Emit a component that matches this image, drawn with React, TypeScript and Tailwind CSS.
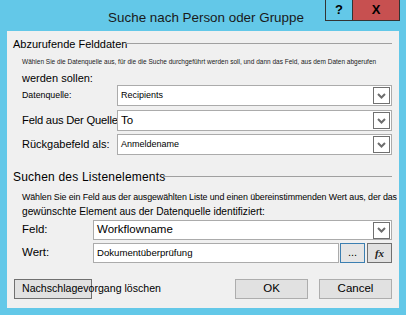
import React from "react";

const font = { fontFamily: '"Liberation Sans", Arial, sans-serif' };

const Chevron = () => (
  <svg width="9" height="6" viewBox="0 0 9 6">
    <path d="M1 1 L4.5 4.5 L8 1" fill="none" stroke="#6d6d6d" strokeWidth="2" />
  </svg>
);

const Select = ({ value, className = "" }: { value: string; className?: string }) => (
  <div className="flex-1 h-full flex items-center bg-white border border-[#ababab] pl-[3px] pr-[1px]">
    <span className={`flex-1 whitespace-nowrap ${className}`}>{value}</span>
    <div className="w-[17px] h-[17px] border border-[#707070] bg-white flex items-center justify-center">
      <Chevron />
    </div>
  </div>
);

const Heading = ({ title, className = "" }: { title: string; className?: string }) => (
  <div className="h-[14px] flex items-center pl-[6px] pr-[7px]">
    <span className={`text-black whitespace-nowrap ${className}`}>{title}</span>
    <div className="flex-1 h-px bg-[#a0a0a0] -ml-[2px] -translate-y-[1px]" />
  </div>
);

export default function App() {
  return (
    <div className="w-[406px] h-[315px] bg-[#63c8e8] flex flex-col overflow-hidden" style={font}>
      <div className="relative h-[31px]">
        <div className="w-full text-center text-[13.4px] text-[#1a1a1a] pt-[8px] pl-[6px]">
          Suche nach Person oder Gruppe
        </div>
        <div className="absolute top-[-1px] right-[6px] flex h-[22px] border border-[#333]">
          <div className="w-[27px] flex items-center justify-center text-[13px] font-bold text-black border-r border-[#333]">?</div>
          <div className="w-[46px] bg-[#c75050] flex items-center justify-center text-[13px] font-bold text-black">X</div>
        </div>
      </div>

      <div className="mx-[7px] h-[277px] bg-[#f0f0f0] flex flex-col pt-[6px]">
        <Heading title="Abzurufende Felddaten" className="text-[11px]" />
        <div className="mt-[6px] h-[10px] pl-[15px] flex items-center text-[6.5px] text-[#1a1a1a] whitespace-nowrap">
          Wählen Sie die Datenquelle aus, für die die Suche durchgeführt werden soll, und dann das Feld, aus dem Daten abgerufen
        </div>
        <div className="mt-[4px] h-[14px] pl-[15px] flex items-center text-[11px] text-black">werden sollen:</div>

        <div className="h-[21px] flex pl-[15px] pr-[7px]">
          <div className="w-[95px] flex items-center text-[8.8px] text-black">Datenquelle:</div>
          <Select value="Recipients" className="text-[9px]" />
        </div>
        <div className="mt-[4px] h-[21px] flex pl-[15px] pr-[7px]">
          <div className="w-[95px] flex items-center text-[11.2px] text-black whitespace-nowrap tracking-[-0.2px]">Feld aus Der Quelle:</div>
          <Select value="To" className="text-[11.5px]" />
        </div>
        <div className="mt-[3px] h-[21px] flex pl-[15px] pr-[7px]">
          <div className="w-[95px] flex items-center text-[11px] text-black whitespace-nowrap">Rückgabefeld als:</div>
          <Select value="Anmeldename" className="text-[9px]" />
        </div>

        <div className="mt-[15px]">
          <Heading title="Suchen des Listenelements" className="text-[12px] tracking-[0.2px]" />
        </div>
        <div className="mt-[7px] pl-[15px] text-black whitespace-nowrap">
          <div className="h-[14px] flex items-center text-[8.9px] tracking-[-0.1px]">
            Wählen Sie ein Feld aus der ausgewählten Liste und einen übereinstimmenden Wert aus, der das
          </div>
          <div className="h-[14px] flex items-center text-[10.2px]">
            gewünschte Element aus der Datenquelle identifiziert:
          </div>
        </div>

        <div className="mt-[1px] h-[20px] flex pl-[15px] pr-[7px]">
          <div className="w-[71px] flex items-center text-[11.5px] text-black">Feld:</div>
          <Select value="Workflowname" className="text-[11.5px]" />
        </div>
        <div className="mt-[3px] h-[20px] flex pl-[15px] pr-[7px]">
          <div className="w-[71px] flex items-center text-[11.5px] text-black">Wert:</div>
          <div className="w-[246px] h-full flex items-center bg-white border border-[#ababab] pl-[3px] text-[9.6px] text-black">
            Dokumentüberprüfung
          </div>
          <div className="ml-[1px] w-[25px] h-full border border-[#3c7fb1] bg-[#e5e5e5] flex items-center justify-center text-[11px] text-black pb-[2px]">
            ...
          </div>
          <div className="ml-[2px] w-[25px] h-full border border-[#707070] bg-[#e1e1e1] flex items-center justify-center text-[11px] italic font-bold text-[#222]" style={{ fontFamily: '"Liberation Serif", serif' }}>
            fx
          </div>
        </div>

        <div className="mt-[16px] h-[20px] flex pl-[7px] pr-[7px]">
          <div className="w-[78px] h-full border border-[#707070] bg-[#e1e1e1] flex items-center pl-[7px] text-[10.6px] text-black whitespace-nowrap overflow-visible">
            Nachschlagevorgang löschen
          </div>
          <div className="flex-1" />
          <div className="w-[73px] h-full border border-[#adadad] bg-[#e1e1e1] flex items-center justify-center text-[11.5px] text-black">OK</div>
          <div className="ml-[11px] w-[73px] h-full border border-[#adadad] bg-[#e1e1e1] flex items-center justify-center text-[11.5px] text-black">Cancel</div>
        </div>
      </div>
    </div>
  );
}
